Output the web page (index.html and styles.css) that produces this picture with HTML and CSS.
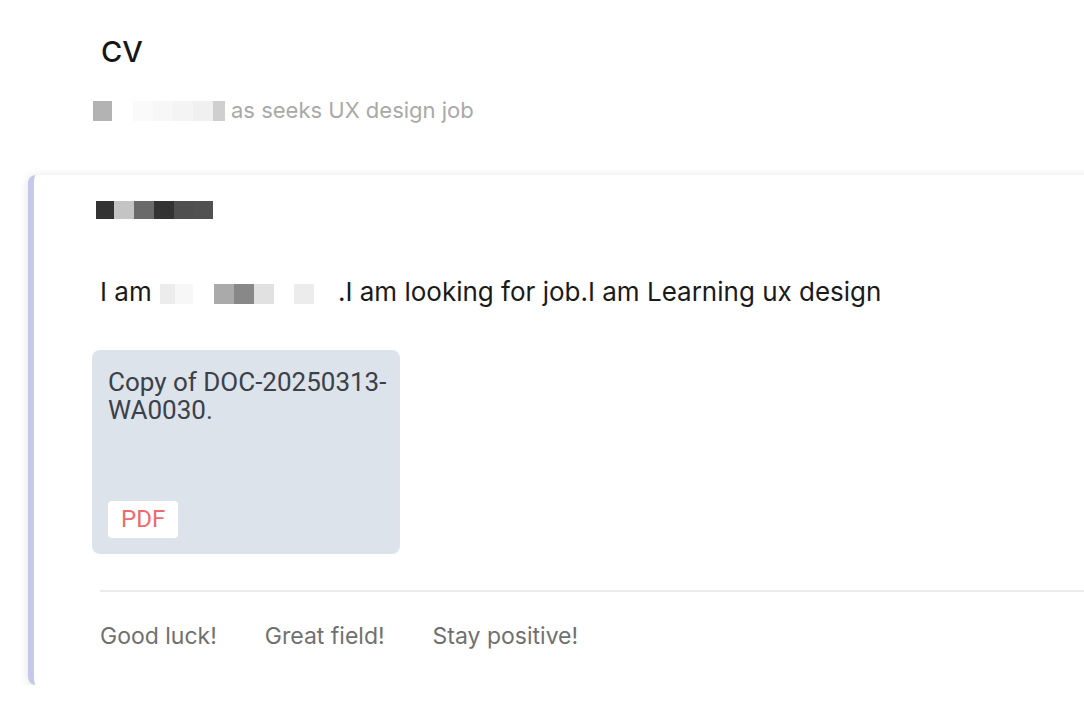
FILE: index.html
```html
<!DOCTYPE html>
<html lang="en">
<head>
  <meta charset="UTF-8">
  <meta name="viewport" content="width=device-width, initial-scale=1.0">
  <title>CV</title>
  <link rel="stylesheet" href="styles.css">
</head>
<body>
  <div class="header">
    <h1>CV</h1>
    <p class="subtitle">
      <span class="blur"><i class="px w19 kb3"></i><i class="px w21 kff"></i><i class="px kfa"></i><i class="px kf7"></i><i class="px kf4"></i><i class="px kf0"></i><i class="px w12 kcf"></i></span>as seeks UX design job
    </p>
  </div>

  <div class="card">
    <div class="author">
      <i class="px w18 k33"></i><i class="px kc4"></i><i class="px k6a"></i><i class="px k33"></i><i class="px k4f"></i><i class="px w19 k51"></i>
    </div>

    <p class="message">
      I am <span class="blur"><i class="px w15 kec"></i><i class="px w18 kf7"></i><i class="px w21 kff"></i><i class="px kaa"></i><i class="px k88"></i><i class="px ke1"></i><i class="px kff"></i><i class="px kec"></i><i class="px w24 kff"></i></span>.I am looking for job.I am Learning ux design
    </p>

    <div class="attachment">
      <div class="file-name">Copy of DOC-20250313-WA0030.</div>
      <span class="file-type">PDF</span>
    </div>

    <div class="reactions">
      <span>Good luck!</span>
      <span>Great field!</span>
      <span>Stay positive!</span>
    </div>
  </div>
</body>
</html>
```

FILE: styles.css
```css
body {
  margin: 0;
  background: #fff;
  font-family: Inter, "Liberation Sans", sans-serif;
  color: #1a1a1a;
  overflow: hidden;
}
.header {
  padding: 34px 0 0 101px;
}
.header h1 {
  margin: 0;
  font-size: 29px;
  font-weight: 500;
  line-height: 36px;
  color: #161616;
}
.subtitle {
  margin: 26px 0 0 -8px;
  font-size: 22px;
  line-height: 28px;
  color: #a9a9a9;
}
.blur {
  display: inline-flex;
  vertical-align: -3px;
}
.subtitle .blur {
  margin-right: 6px;
}

/* pixelated (blurred) name blocks */
.px {
  display: inline-block;
  width: 20px;
  height: 20px;
}
.w12 { width: 12px; }
.w15 { width: 15px; }
.w18 { width: 18px; }
.w19 { width: 19px; }
.w21 { width: 21px; }
.w24 { width: 24px; }
.k33 { background: #333; }
.k4f { background: #4f4f4f; }
.k51 { background: #515151; }
.k6a { background: #6a6a6a; }
.k88 { background: #888; }
.kaa { background: #aaa; }
.kb3 { background: #b3b3b3; }
.kc4 { background: #c4c4c4; }
.kcf { background: #cfcfcf; }
.ke1 { background: #e1e1e1; }
.kec { background: #ececec; }
.kf0 { background: #f0f0f0; }
.kf4 { background: #f4f4f4; }
.kf7 { background: #f7f7f7; }
.kfa { background: #fafafa; }
.kff { background: #fff; }

.card {
  margin: 51px 0 0 28px;
  width: 1100px;
  background: #fff;
  border-left: 6px solid #c5c8ea;
  border-radius: 8px;
  box-shadow: 0 1px 10px rgba(0, 0, 0, 0.12);
  padding: 26px 0 35px 66px;
  box-sizing: border-box;
}
.author {
  display: flex;
  margin-left: -4px;
}
.author .px {
  height: 18px;
}
.message {
  margin: 56px 0 0 0;
  font-size: 26px;
  line-height: 34px;
  color: #1a1a1a;
}
.message .blur {
  margin-left: 1px;
}
.attachment {
  margin: 41px 0 0 -8px;
  width: 308px;
  height: 204px;
  background: #dde3ea;
  border-radius: 8px;
  padding: 18px 4px 16px 16px;
  box-sizing: border-box;
  display: flex;
  flex-direction: column;
  justify-content: space-between;
  align-items: flex-start;
  font-family: Roboto, "Liberation Sans", sans-serif;
}
.file-name {
  font-size: 26px;
  line-height: 28px;
  color: #3b4049;
}
.file-type {
  background: #fff;
  border-radius: 4px;
  padding: 4px 13px;
  font-size: 24px;
  line-height: 29px;
  color: #ec6b6e;
}
.reactions {
  margin-top: 36px;
  border-top: 2px solid #ebebeb;
  padding-top: 30px;
  display: flex;
  gap: 48px;
  font-size: 23px;
  line-height: 28px;
  color: #707070;
}
```
